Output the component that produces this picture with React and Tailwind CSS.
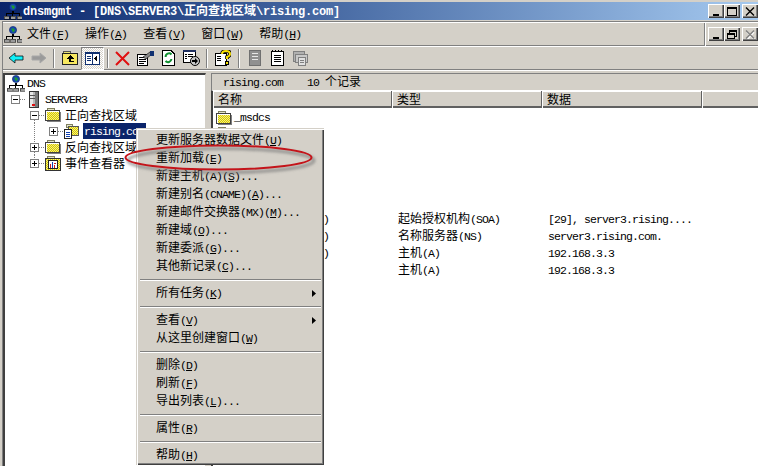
import React from "react";

const FACE = "bg-[#d4d0c8]";

function T({ children, bold = false, className = "" }) {
  const src = String(children);
  const parts = src.split(/([\u3000-\u9fff]+)/).filter(Boolean);
  const latin = bold
    ? "font-['Liberation_Mono',monospace] font-bold text-[12px] tracking-[-0.2px]"
    : "font-['Liberation_Mono',monospace] text-[11.5px] tracking-[-0.9px]";
  return (
    <span className={`block -translate-y-[1px] whitespace-pre leading-[16px] ${className}`}>
      {parts.map((p, i) => {
        if (/[\u3000-\u9fff]/.test(p)) {
          return (
            <span key={i} className={`font-['Noto_Sans_CJK_SC',sans-serif] text-[12px] ${bold ? "font-bold" : ""}`}>
              {p}
            </span>
          );
        }
        const segs = p.split(/(&.)/).filter(Boolean);
        return (
          <span key={i} className={latin}>
            {segs.map((s, j) =>
              s[0] === "&" ? <u key={j}>{s[1]}</u> : <span key={j}>{s}</span>
            )}
          </span>
        );
      })}
    </span>
  );
}

const Crisp = ({ w, h, children, className = "" }) => (
  <svg width={w} height={h} viewBox={`0 0 ${w} ${h}`} shapeRendering="crispEdges" className={`shrink-0 ${className}`}>
    {children}
  </svg>
);

function DnsIcon() {
  return (
    <svg width="18" height="17" viewBox="0 0 18 17" className="shrink-0">
      <circle cx="9" cy="4" r="3.6" fill="#1747b0" stroke="#0a2468" strokeWidth="0.6" />
      <path d="M7 2.5h3l1 2-2 2-1-2z" fill="#1d9a35" />
      <g shapeRendering="crispEdges">
        <rect x="8" y="8" width="2" height="3" fill="#000" />
        <rect x="2" y="10" width="14" height="1" fill="#000" />
        <rect x="2" y="10" width="1" height="3" fill="#000" />
        <rect x="15" y="10" width="1" height="3" fill="#000" />
        <rect x="8" y="10" width="1" height="3" fill="#000" />
        <rect x="0" y="13" width="5" height="3" fill="#9a9a9a" stroke="#000" strokeWidth="0.5" />
        <rect x="6.5" y="13" width="5" height="3" fill="#9a9a9a" stroke="#000" strokeWidth="0.5" />
        <rect x="13" y="13" width="5" height="3" fill="#9a9a9a" stroke="#000" strokeWidth="0.5" />
      </g>
    </svg>
  );
}

function Dither() {
  return (
    <pattern id="dith" width="2" height="2" patternUnits="userSpaceOnUse">
      <rect width="2" height="2" fill="#f4f080" />
      <rect width="1" height="1" fill="#d8c800" />
      <rect x="1" y="1" width="1" height="1" fill="#d8c800" />
    </pattern>
  );
}

function Folder() {
  return (
    <Crisp w={16} h={14}>
      <defs><Dither /></defs>
      <rect x="2" y="0" width="7" height="3" fill="#e4e4c8" stroke="#808060" />
      <rect x="0.5" y="2.5" width="14" height="10" fill="url(#dith)" stroke="#404040" />
      <rect x="1" y="3" width="13" height="1" fill="#fff" />
      <rect x="1" y="3" width="1" height="9" fill="#fff" />
      <rect x="15" y="4" width="1" height="10" fill="#808080" />
      <rect x="2" y="13" width="14" height="1" fill="#808080" />
    </Crisp>
  );
}

function ZoneFolder() {
  return (
    <Crisp w={15} h={15}>
      <defs><Dither /></defs>
      <rect x="2" y="0" width="6" height="3" fill="#e4e4c8" stroke="#808060" />
      <rect x="4.5" y="2.5" width="10" height="9" fill="url(#dith)" stroke="#555" />
      <rect x="0.5" y="5.5" width="7" height="9" fill="#fff" stroke="#222" />
      <rect x="2" y="8" width="4" height="1" fill="#1040b0" />
      <rect x="2" y="10" width="4" height="1" fill="#1040b0" />
      <rect x="2" y="12" width="4" height="1" fill="#1040b0" />
    </Crisp>
  );
}

function Server() {
  return (
    <Crisp w={12} h={17}>
      <rect x="1.5" y="0.5" width="9" height="16" fill="#b8b8b8" stroke="#333" />
      <rect x="2" y="1" width="3" height="15" fill="#e8e8e8" />
      <rect x="2" y="4" width="8" height="1" fill="#555" />
      <rect x="2" y="7" width="8" height="1" fill="#555" />
      <rect x="7" y="1" width="3" height="15" fill="#777" />
      <rect x="4" y="13" width="3" height="2" fill="#e01010" />
    </Crisp>
  );
}

function EventIcon() {
  return (
    <Crisp w={16} h={15}>
      <defs><Dither /></defs>
      <rect x="2" y="0" width="7" height="3" fill="#e4e4c8" stroke="#808060" />
      <rect x="0.5" y="2.5" width="15" height="12" fill="url(#dith)" stroke="#333" />
      <rect x="3.5" y="4.5" width="9" height="8" fill="#fff" stroke="#222" />
      <rect x="5" y="8" width="1" height="4" fill="#d01818" />
      <rect x="7" y="6" width="1" height="6" fill="#1040b0" />
      <rect x="9" y="7" width="2" height="1" fill="#d01818" />
      <rect x="9" y="9" width="1" height="3" fill="#d01818" />
    </Crisp>
  );
}

function Cell({ box, up, down, guide, stub = true }) {
  const dot = { stroke: "#808080", strokeDasharray: "1 1" };
  return (
    <Crisp w={19} h={16}>
      {guide && <line x1="9.5" y1="0" x2="9.5" y2="16" {...dot} />}
      {up && <line x1="9.5" y1="0" x2="9.5" y2="4" {...dot} />}
      {down && <line x1="9.5" y1="13" x2="9.5" y2="16" {...dot} />}
      {box && (
        <>
          {stub && <line x1="14" y1="8.5" x2="19" y2="8.5" {...dot} />}
          <rect x="5.5" y="4.5" width="8" height="8" fill="#fff" stroke="#808080" />
          <rect x="7" y="8" width="5" height="1" fill="#000" />
          {box === "plus" && <rect x="9" y="6" width="1" height="5" fill="#000" />}
        </>
      )}
    </Crisp>
  );
}

function TreeRow({ children }) {
  return <div className="h-[16px] flex items-center pl-[1px]">{children}</div>;
}

const Spacer = () => <div className="w-[19px] h-[16px] shrink-0" />;

function ToolBtn({ children, pressed }) {
  return (
    <div
      className={`w-[23px] h-[23px] flex items-center justify-center shrink-0 ${
        pressed
          ? "bg-[repeating-conic-gradient(#ffffff_0_25%,#d4d0c8_0_50%)] bg-[length:2px_2px] border border-t-[#808080] border-l-[#808080] border-b-white border-r-white"
          : ""
      }`}
    >
      {children}
    </div>
  );
}

const ToolSep = ({ w }) => (
  <div className="h-[23px] flex items-center justify-center shrink-0" style={{ width: w }}>
    <div className="w-[2px] h-[19px] border-l border-l-[#808080] border-r border-r-white" />
  </div>
);

const Back = () => (
  <Crisp w={16} h={12}>
    <path d="M7 1 L1 6 L7 11 V8 H15 V4 H7 Z" fill="#10f0f8" stroke="#101010" strokeWidth="0.8" shapeRendering="auto" />
  </Crisp>
);
const Forward = () => (
  <Crisp w={16} h={12}>
    <path d="M9 1 L15 6 L9 11 V8 H1 V4 H9 Z" fill="#9a9a9a" stroke="#a8a8a8" shapeRendering="auto" />
  </Crisp>
);
const UpFolder = () => (
  <Crisp w={16} h={14}>
    <rect x="1" y="0" width="7" height="3" fill="#e8e070" stroke="#555" />
    <rect x="0.5" y="2.5" width="15" height="11" fill="#f8e860" stroke="#222" />
    <path d="M8 4 L4.5 7.5 H7 V10.5 H12 V9.5 H9 V7.5 H11.5 Z" fill="#000" />
  </Crisp>
);
const ShowHide = () => (
  <Crisp w={15} h={13}>
    <rect x="0.5" y="0.5" width="14" height="12" fill="#fff" stroke="#103070" />
    <rect x="0" y="0" width="15" height="2" fill="#103070" />
    <rect x="7" y="0" width="1" height="13" fill="#103070" />
    <rect x="2" y="4" width="4" height="1" fill="#103070" />
    <rect x="2" y="6" width="4" height="1" fill="#103070" />
    <rect x="2" y="8" width="4" height="1" fill="#103070" />
    <path d="M12 4 L9 6.5 L12 9 Z" fill="#000" />
  </Crisp>
);
const RedX = () => (
  <svg width="15" height="15" viewBox="0 0 15 15" className="shrink-0">
    <path d="M1 1 L14 14 M14 1 L1 14" stroke="#e01010" strokeWidth="2" />
  </svg>
);
const Props = () => (
  <Crisp w={17} h={15}>
    <rect x="0.5" y="3.5" width="10" height="11" fill="#fff" stroke="#000" />
    <rect x="2" y="6" width="7" height="1" fill="#000" />
    <rect x="2" y="8" width="7" height="1" fill="#000" />
    <rect x="2" y="10" width="7" height="1" fill="#000" />
    <rect x="2" y="12" width="5" height="1" fill="#000" />
    <path d="M6 6 L13 1 L15 3 L9 8 Z" fill="#888" stroke="#000" shapeRendering="auto" strokeWidth="0.6" />
    <rect x="13" y="0" width="4" height="5" fill="#103070" />
  </Crisp>
);
const Refresh = () => (
  <Crisp w={13} h={16}>
    <path d="M0.5 0.5 H9 L12.5 4 V15.5 H0.5 Z" fill="#fff" stroke="#000" />
    <path d="M9.5 4.5 A3.4 3.4 0 0 0 3.6 7" fill="none" stroke="#109030" strokeWidth="2" shapeRendering="auto" />
    <path d="M3.5 11 A3.4 3.4 0 0 0 9.4 9" fill="none" stroke="#109030" strokeWidth="2" shapeRendering="auto" />
  </Crisp>
);
const Export = () => (
  <Crisp w={17} h={16}>
    <rect x="0.5" y="0.5" width="12" height="12" fill="#fff" stroke="#000" />
    <rect x="0" y="0" width="13" height="2" fill="#203060" />
    <rect x="2" y="4" width="2" height="1" fill="#000" />
    <rect x="5" y="4" width="5" height="1" fill="#000" />
    <rect x="2" y="6" width="2" height="1" fill="#000" />
    <rect x="5" y="6" width="5" height="1" fill="#000" />
    <rect x="2" y="8" width="2" height="1" fill="#000" />
    <circle cx="12" cy="11" r="4.5" fill="#c8c8c8" stroke="#000" shapeRendering="auto" />
    <path d="M9 10 H12 V8 L15 11 L12 14 V12 H9 Z" fill="#000" shapeRendering="auto" />
  </Crisp>
);
const Help = () => (
  <Crisp w={16} h={16}>
    <path d="M0.5 3.5 H11 V15.5 H0.5 Z" fill="#fff" stroke="#000" />
    <rect x="2" y="6" width="4" height="1" fill="#000" />
    <rect x="2" y="8" width="4" height="1" fill="#000" />
    <rect x="2" y="10" width="4" height="1" fill="#000" />
    <path d="M7 4 Q7 1 11 1 Q15 1 15 4 Q15 6 12 7 V9" fill="none" stroke="#000" strokeWidth="3.6" shapeRendering="auto" />
    <path d="M7 4 Q7 1 11 1 Q15 1 15 4 Q15 6 12 7 V9" fill="none" stroke="#f8e000" strokeWidth="2" shapeRendering="auto" />
    <rect x="10" y="11" width="3" height="3" fill="#f8e000" stroke="#000" />
  </Crisp>
);
const Doc1 = () => (
  <Crisp w={12} h={16}>
    <rect x="0.5" y="0.5" width="11" height="15" fill="#909090" stroke="#707070" />
    <rect x="3" y="3" width="6" height="1" fill="#e8e8e8" />
    <rect x="3" y="6" width="6" height="1" fill="#e8e8e8" />
    <rect x="3" y="9" width="6" height="1" fill="#e8e8e8" />
  </Crisp>
);
const Doc2 = () => (
  <Crisp w={13} h={16}>
    <rect x="0.5" y="1.5" width="12" height="14" fill="#fff" stroke="#000" />
    <rect x="1" y="0" width="1" height="2" fill="#000" />
    <rect x="4" y="0" width="1" height="2" fill="#000" />
    <rect x="7" y="0" width="1" height="2" fill="#000" />
    <rect x="10" y="0" width="1" height="2" fill="#000" />
    <rect x="3" y="5" width="7" height="1" fill="#000" />
    <rect x="3" y="7" width="7" height="1" fill="#000" />
    <rect x="3" y="9" width="7" height="1" fill="#000" />
    <rect x="3" y="11" width="7" height="1" fill="#000" />
  </Crisp>
);
const Doc3 = () => (
  <Crisp w={16} h={15}>
    <rect x="0.5" y="0.5" width="11" height="10" fill="#b0b0b0" stroke="#808080" />
    <rect x="2.5" y="3.5" width="12" height="8" fill="#c8c8c8" stroke="#808080" />
    <rect x="5.5" y="6.5" width="7" height="8" fill="#e0e0e0" stroke="#808080" />
    <rect x="7" y="9" width="4" height="1" fill="#808080" />
    <rect x="7" y="11" width="4" height="1" fill="#808080" />
  </Crisp>
);

const BEVEL = "shadow-[inset_1px_1px_0_#ffffff,inset_-1px_-1px_0_#404040,inset_-2px_-2px_0_#808080]";

function WinBtn({ children, className = "" }) {
  return (
    <div className={`w-[16px] h-[14px] ${FACE} ${BEVEL} flex items-center justify-center shrink-0 ${className}`}>
      {children}
    </div>
  );
}

const Min = () => (
  <Crisp w={10} h={9}>
    <rect x="2" y="7" width="6" height="2" fill="#000" />
  </Crisp>
);
const Max = () => (
  <Crisp w={10} h={9}>
    <rect x="0.5" y="0.5" width="9" height="8" fill="none" stroke="#000" />
    <rect x="0" y="0" width="10" height="2" fill="#000" />
  </Crisp>
);
const Close = ({ color = "#000", shadow }) => (
  <svg width="10" height="9" viewBox="0 0 10 9">
    {shadow && <path d="M2 2 L10 10 M9 2 L2 10" stroke="#fff" strokeWidth="1.4" />}
    <path d="M1 0.5 L9 8.5 M9 0.5 L1 8.5" stroke={color} strokeWidth="1.4" />
  </svg>
);
const Restore = () => (
  <Crisp w={10} h={9}>
    <rect x="2.5" y="0.5" width="7" height="6" fill="none" stroke="#000" />
    <rect x="2" y="0" width="8" height="2" fill="#000" />
    <rect x="0.5" y="3.5" width="7" height="5" fill="#d4d0c8" stroke="#000" />
    <rect x="0" y="3" width="8" height="2" fill="#000" />
  </Crisp>
);

function MenuItem({ text, arrow }) {
  return (
    <div className="h-[18px] flex items-center pl-[19px] pr-[8px] justify-between text-black">
      <T>{text}</T>
      {arrow && (
        <svg width="4" height="7" viewBox="0 0 4 7" className="shrink-0">
          <path d="M0 0 L4 3.5 L0 7 Z" fill="#000" />
        </svg>
      )}
    </div>
  );
}
const MenuSep = () => (
  <div className="h-[9px] flex items-center px-[3px]">
    <div className="w-full h-[2px] bg-[#808080] border-b border-b-white" />
  </div>
);

const rows = [
  { name: "_msdcs", folder: true },
  { folder: true },
  { folder: true },
  { folder: true },
  { folder: true },
  { folder: true },
  { clip: ")", type: "起始授权机构(SOA)", data: "[29], server3.rising...." },
  { clip: ")", type: "名称服务器(NS)", data: "server3.rising.com." },
  { clip: ")", type: "主机(A)", data: "192.168.3.3" },
  { type: "主机(A)", data: "192.168.3.3" },
];

export default function App() {
  return (
    <div className={`relative w-[758px] h-[466px] overflow-hidden ${FACE} pt-[2px] flex flex-col`}>
      {/* title bar */}
      <div className="h-[18px] flex items-center bg-gradient-to-r from-[#0a246a] to-[#a6caf0] pl-[4px] pr-0 shrink-0">
        <DnsIcon />
        <T bold className="text-white ml-[1px]">{"dnsmgmt - [DNS\\SERVER3\\正向查找区域\\rising.com]"}</T>
        <div className="ml-auto flex items-center">
          <WinBtn><Min /></WinBtn>
          <WinBtn><Max /></WinBtn>
          <WinBtn className="ml-[2px]"><Close /></WinBtn>
        </div>
      </div>
      <div className="flex-1 min-h-0 flex flex-col pl-[2px] pt-[1px]">
        <div className="border-t border-t-[#808080] border-l border-l-[#808080] flex-1 min-h-0 flex flex-col">
          {/* menu bar */}
          <div className="h-[24px] flex items-center border-b border-b-[#808080] shrink-0 pl-[1px] border-t border-t-white">
            <DnsIcon />
            <div className="flex items-center gap-[16px] ml-[5px] flex-1">
              <T>{"文件(&F)"}</T>
              <T>{"操作(&A)"}</T>
              <T>{"查看(&V)"}</T>
              <T>{"窗口(&W)"}</T>
              <T>{"帮助(&H)"}</T>
            </div>
            <div className="self-stretch w-[2px] bg-white border-l border-l-[#808080] -mb-[1px]" />
            <div className="flex items-center pl-[2px]">
              <WinBtn><Min /></WinBtn>
              <WinBtn><Restore /></WinBtn>
              <WinBtn className="ml-[2px]"><Close color="#808080" shadow /></WinBtn>
            </div>
          </div>
          {/* toolbar */}
          <div className="h-[24px] border-t border-t-white border-b border-b-[#808080] flex items-center pl-[1px] shrink-0">
            <ToolBtn><Back /></ToolBtn>
            <ToolBtn><Forward /></ToolBtn>
            <ToolSep w={8} />
            <ToolBtn><UpFolder /></ToolBtn>
            <ToolBtn pressed><ShowHide /></ToolBtn>
            <ToolSep w={7} />
            <ToolBtn><RedX /></ToolBtn>
            <ToolBtn><Props /></ToolBtn>
            <ToolBtn><Refresh /></ToolBtn>
            <ToolBtn><Export /></ToolBtn>
            <ToolSep w={8} />
            <ToolBtn><Help /></ToolBtn>
            <ToolSep w={9} />
            <ToolBtn><Doc1 /></ToolBtn>
            <ToolBtn><Doc2 /></ToolBtn>
            <ToolBtn><Doc3 /></ToolBtn>
          </div>
          <div className="h-[1px] bg-white shrink-0" />
          {/* panes */}
          <div className="flex-1 min-h-0 flex pt-[2px]">
            {/* tree */}
            <div className="w-[203px] shrink-0 bg-white border-t-2 border-l-2 border-t-[#404040] border-l-[#404040] border-r border-r-[#d4d0c8]">
              <div className="h-[16px] flex items-center pl-[2px]">
                <DnsIcon />
                <T className="ml-[2px]">DNS</T>
              </div>
              <TreeRow>
                <Cell box="minus" />
                <div className="ml-[3px]"><Server /></div>
                <T className="ml-[5px]">SERVER3</T>
              </TreeRow>
              <TreeRow>
                <Spacer />
                <Cell box="minus" down />
                <div className="ml-[1px]"><Folder /></div>
                <T className="ml-[4px]">正向查找区域</T>
              </TreeRow>
              <TreeRow>
                <Spacer />
                <Cell guide />
                <Cell box="plus" />
                <div className="ml-[1px]"><ZoneFolder /></div>
                <div className="ml-[4px] h-[16px] w-[63px] bg-[#0a246a] text-white pl-[1px] flex items-center">
                  <T>rising.co</T>
                </div>
              </TreeRow>
              <TreeRow>
                <Spacer />
                <Cell box="plus" up down />
                <div className="ml-[1px]"><Folder /></div>
                <T className="ml-[4px]">反向查找区域</T>
              </TreeRow>
              <TreeRow>
                <Spacer />
                <Cell box="plus" up />
                <div className="ml-[1px]"><EventIcon /></div>
                <T className="ml-[4px]">事件查看器</T>
              </TreeRow>
            </div>
            {/* right */}
            <div className="flex-1 min-w-0 ml-[5px] flex flex-col">
              <div className="h-[17px] border-t border-l border-t-[#808080] border-l-[#808080] flex items-center pl-[11px] shrink-0">
                <T>{"rising.com    10 个记录"}</T>
              </div>
              <div className="flex-1 min-h-0 bg-white border-t border-l-2 border-t-white border-l-[#404040]">
                <div className={`h-[17px] grid grid-cols-[179px_150px_160px_1fr] ${FACE} border-b-2 border-b-[#606060]`}>
                  {["名称", "类型", "数据", ""].map((h, i) => (
                    <div key={i} className="border-r border-r-[#606060] pl-[5px] flex items-center shadow-[inset_1px_1px_0_#ffffff] last:border-r-0">
                      <T>{h}</T>
                    </div>
                  ))}
                </div>
                {rows.map((r, i) => (
                  <div key={i} className="h-[17px] grid grid-cols-[179px_150px_160px_1fr] items-center">
                    <div className={`flex items-center gap-[2px] min-w-0 ${r.clip ? "pl-[110px]" : "pl-[3px]"}`}>
                      {r.folder && <Folder />}
                      {r.name && <T>{r.name}</T>}
                      {r.clip && <T>{r.clip}</T>}
                    </div>
                    <div className="pl-[6px]">{r.type && <T>{r.type}</T>}</div>
                    <div className="pl-[6px]">{r.data && <T>{r.data}</T>}</div>
                  </div>
                ))}
              </div>
            </div>
          </div>
        </div>
      </div>

      {/* context menu */}
      <div className={`absolute left-[136px] top-[128px] w-[188px] h-[337px] ${FACE} pt-[2px] ${BEVEL} border-l border-t border-[#d4d0c8]`}>
        <MenuItem text="更新服务器数据文件(&U)" />
        <MenuItem text="重新加载(&E)" />
        <MenuItem text="新建主机(A)(&S)..." />
        <MenuItem text="新建别名(CNAME)(&A)..." />
        <MenuItem text="新建邮件交换器(MX)(&M)..." />
        <MenuItem text="新建域(&O)..." />
        <MenuItem text="新建委派(&G)..." />
        <MenuItem text="其他新记录(&C)..." />
        <MenuSep />
        <MenuItem text="所有任务(&K)" arrow />
        <MenuSep />
        <MenuItem text="查看(&V)" arrow />
        <MenuItem text="从这里创建窗口(&W)" />
        <MenuSep />
        <MenuItem text="删除(&D)" />
        <MenuItem text="刷新(&F)" />
        <MenuItem text="导出列表(&L)..." />
        <MenuSep />
        <MenuItem text="属性(&R)" />
        <MenuSep />
        <MenuItem text="帮助(&H)" />
      </div>

      {/* hand-drawn annotation */}
      <svg width="210" height="44" viewBox="0 0 210 44" className="absolute left-[118px] top-[138px] pointer-events-none">
        <defs>
          <filter id="blur" x="-10%" y="-50%" width="120%" height="200%">
            <feGaussianBlur stdDeviation="1.6" />
          </filter>
        </defs>
        <ellipse cx="103" cy="22.5" rx="93" ry="12" fill="none" stroke="#777" strokeOpacity="0.8" strokeWidth="2.5" filter="url(#blur)" />
        <ellipse cx="100.5" cy="19.5" rx="93" ry="12" fill="none" stroke="#c4141a" strokeWidth="2" />
      </svg>
    </div>
  );
}
